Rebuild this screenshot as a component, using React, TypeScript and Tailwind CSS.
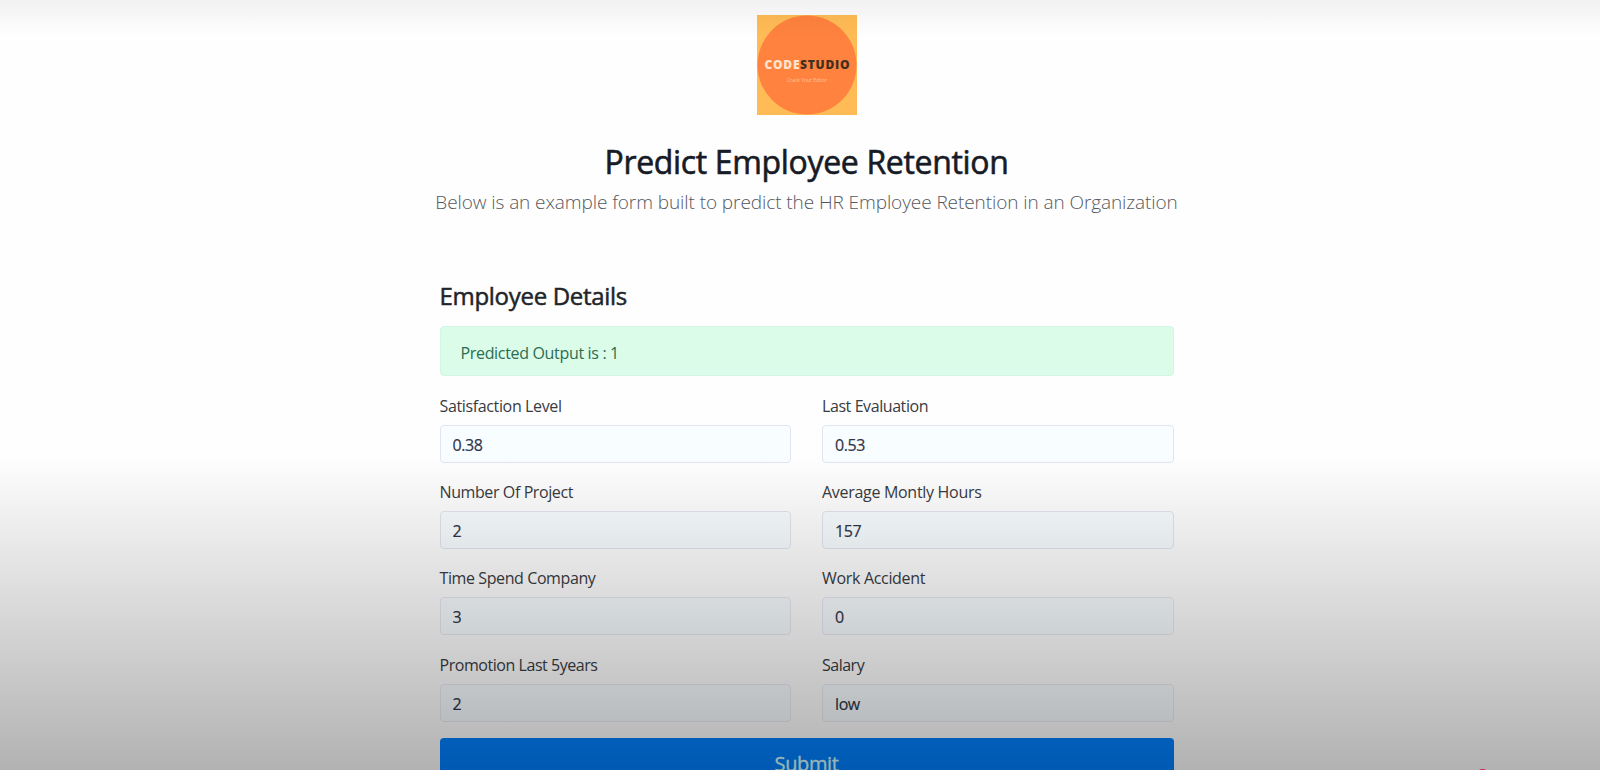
const rows = [
  {
    height: 'h-[86px]',
    border: 'border-[#e2e5f1]',
    fields: [
      { label: 'Satisfaction Level', value: '0.38', track: 'tracking-[-0.36px]' },
      { label: 'Last Evaluation', value: '0.53', track: 'tracking-[-0.42px]' },
    ],
  },
  {
    height: 'h-[86px]',
    border: 'border-[#e3e5ee]',
    fields: [
      { label: 'Number Of Project', value: '2', track: 'tracking-[-0.4px]' },
      { label: 'Average Montly Hours', value: '157', track: 'tracking-[-0.3px]' },
    ],
  },
  {
    height: 'h-[87px]',
    border: 'border-[#e7e9f4]',
    fields: [
      { label: 'Time Spend Company', value: '3', track: 'tracking-[-0.4px]' },
      { label: 'Work Accident', value: '0', track: 'tracking-[-0.32px]' },
    ],
  },
  {
    height: 'h-[86px]',
    border: 'border-[#e9ecf4]',
    fields: [
      { label: 'Promotion Last 5years', value: '2', track: 'tracking-[-0.45px]' },
      { label: 'Salary', value: 'low', track: 'tracking-[-0.5px]' },
    ],
  },
];

function Logo() {
  return (
    <svg width="100" height="100" viewBox="0 0 100 100" className="block">
      <rect width="100" height="100" fill="#ffbb55" />
      <circle cx="50" cy="50" r="49.5" fill="#ff823e" />
      <text x="7.5" y="54" fontFamily="Open Sans, sans-serif" fontWeight="800" fontSize="12" textLength="35" fill="#ffe3cc">
        CODE
      </text>
      <text x="43" y="54" fontFamily="Open Sans, sans-serif" fontWeight="800" fontSize="12" textLength="49.5" fill="#42301f">
        STUDIO
      </text>
      <text x="30" y="67" fontFamily="Open Sans, sans-serif" fontSize="5" textLength="40" fill="#ffc49c">
        Crack Your Editor
      </text>
    </svg>
  );
}

export default function App() {
  return (
    <div className="relative h-[770px] w-full overflow-hidden bg-[#fefefe] font-['Open_Sans',sans-serif] text-[#212529]">
      <main className="ml-[439.5px] flex w-[734px] flex-col">
        <header className="flex flex-col items-center pt-[15px]">
          <Logo />
          <h1 className="mt-[27px] h-10 text-[32px] leading-10 font-medium whitespace-nowrap tracking-[-0.34px] text-[#171b26] [-webkit-text-stroke:0.6px_#171b26]">
            Predict Employee Retention
          </h1>
          <p className="mt-[5px] h-[30px] text-[19px] leading-[30px] font-light whitespace-nowrap tracking-[-0.08px] text-[#55585e]">
            Below is an example form built to predict the HR Employee Retention in an Organization
          </p>
        </header>

        <h2 className="mt-[64px] h-[29px] text-[24px] leading-[29px] font-medium whitespace-nowrap tracking-[-0.3px] [-webkit-text-stroke:0.5px_#212529]">
          Employee Details
        </h2>
        <div className="mt-[16px] h-[50px] rounded border border-[#d3f5e4] bg-[#dcfcea] px-5 pt-px text-[16px] leading-[50px] tracking-[-0.33px] text-[#2b6d50]">
          Predicted Output is : 1
        </div>

        <form className="mt-[18px] flex flex-col">
          {rows.map((row) => (
            <div key={row.fields[0].label} className={`grid grid-cols-2 gap-x-[31px] ${row.height}`}>
              {row.fields.map((field) => (
                <label key={field.label} className="flex flex-col">
                  <span className={`h-[31px] text-[16px] leading-6 whitespace-nowrap text-[#383b42] ${field.track}`}>
                    {field.label}
                  </span>
                  <input
                    readOnly
                    value={field.value}
                    className={`h-[38px] w-full rounded border bg-[#f8fdff] px-3 pt-[2px] text-[16px] tracking-[-0.4px] text-[#30344a] outline-none [-webkit-text-stroke:0.2px_#30344a] ${row.border}`}
                  />
                </label>
              ))}
            </div>
          ))}
          <button
            type="button"
            className="mt-[-1px] h-12 rounded bg-[#0080ff] pt-[3px] text-[20px] leading-[30px] tracking-[-0.4px] text-[#d5ffff] [-webkit-text-stroke:0.3px_#d5ffff]"
          >
            Submit
          </button>
        </form>
      </main>

      <div className="pointer-events-none absolute inset-x-0 top-0 h-9 bg-gradient-to-b from-black/5 to-transparent" />
      <div className="pointer-events-none absolute inset-x-0 bottom-0 h-[315px] bg-gradient-to-b from-black/0 to-black/30" />
      <div className="absolute top-[769px] left-[1478px] h-2 w-[9px] rounded-t-sm bg-[#d02a50]" />
    </div>
  );
}
